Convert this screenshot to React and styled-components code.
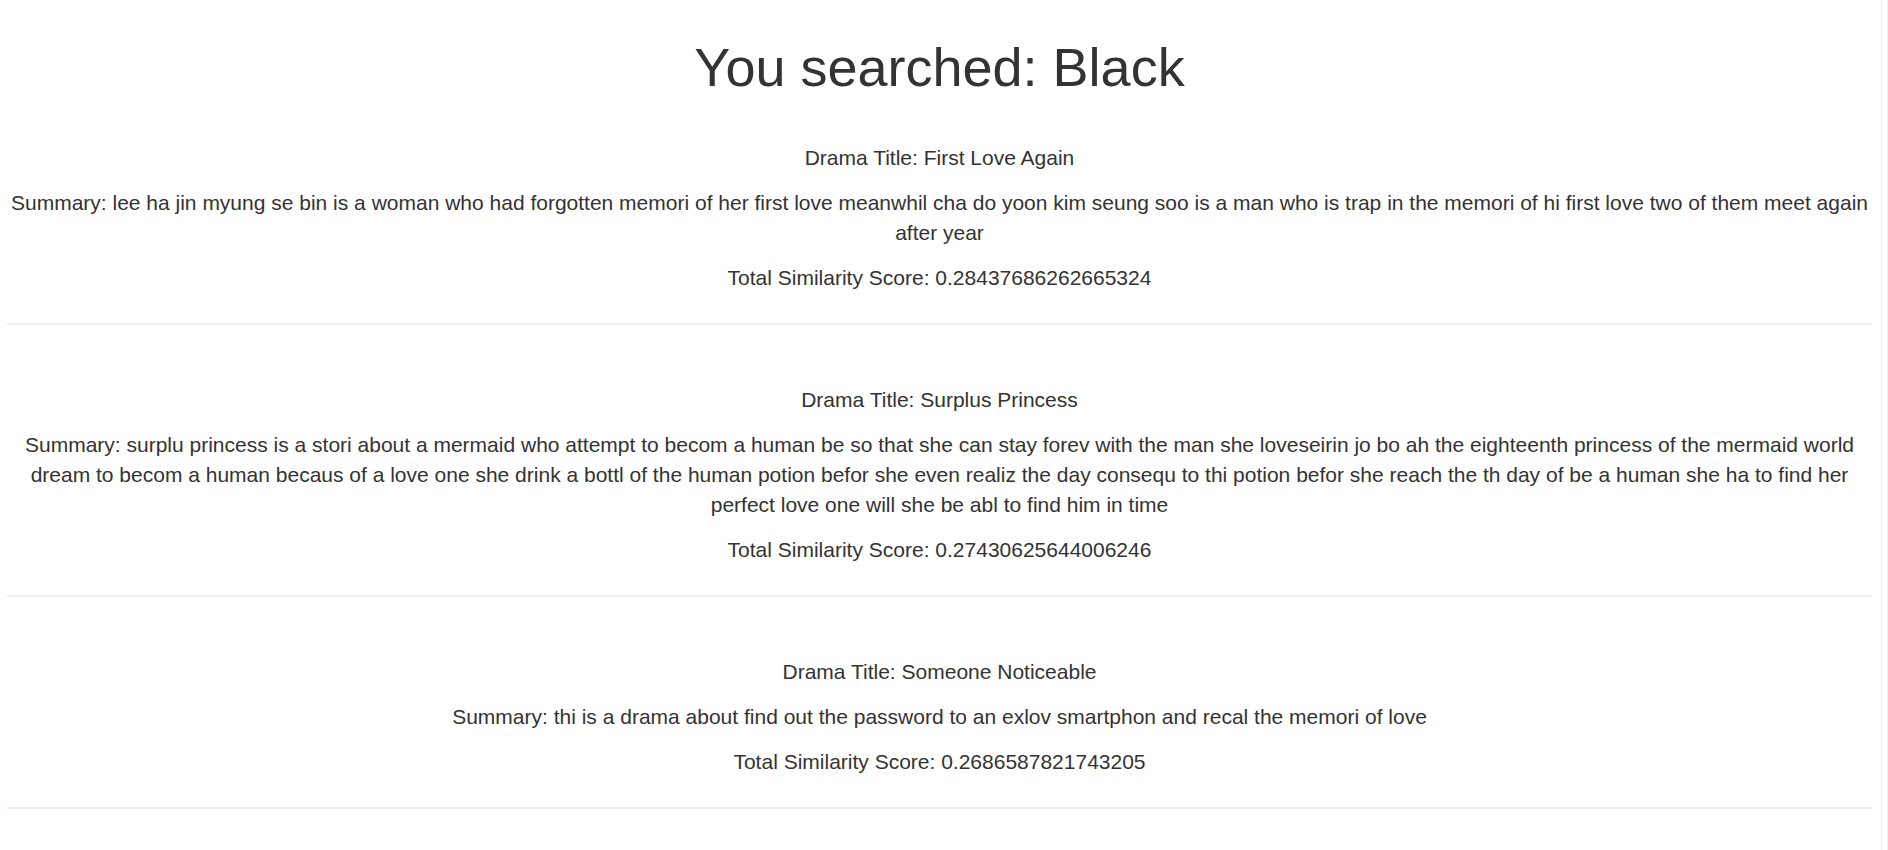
import React from "react";
import styled, { createGlobalStyle } from "styled-components";

const GlobalStyle = createGlobalStyle`
  html, body {
    margin: 0;
    padding: 0;
    background: #fff;
  }
  body {
    font-family: "Liberation Sans", Arial, Helvetica, sans-serif;
    font-size: 21px;
    line-height: 30px;
    color: #333;
  }
`;

const Page = styled.div`
  display: flex;
  min-height: 100vh;
`;

const Main = styled.main`
  flex: 1;
  min-width: 0;
  padding: 38px 0 0 7px;
  text-align: center;
`;

// faint scrollbar gutter on the right edge of the window
const Gutter = styled.div`
  width: 16px;
  flex-shrink: 0;
  display: flex;
  padding-left: 9px;
  box-sizing: border-box;
`;

const Thumb = styled.div`
  width: 6px;
  border-left: 1px solid #efefef;
  border-right: 1px solid #efefef;
`;

const Heading = styled.h1`
  margin: 0 0 16px;
  font-size: 54px;
  line-height: 1.1;
  font-weight: 500;
  color: #333;
`;

const Result = styled.section`
  padding-top: 30px;
`;

const Line = styled.p`
  margin: 0 0 15px;
`;

const Divider = styled.hr`
  margin: 30px 0;
  border: 0;
  border-top: 2px solid #eee;
  height: 0;
`;

const results = [
  {
    title: "First Love Again",
    summary:
      "lee ha jin myung se bin is a woman who had forgotten memori of her first love meanwhil cha do yoon kim seung soo is a man who is trap in the memori of hi first love two of them meet again after year",
    score: "0.28437686262665324",
  },
  {
    title: "Surplus Princess",
    summary:
      "surplu princess is a stori about a mermaid who attempt to becom a human be so that she can stay forev with the man she loveseirin jo bo ah the eighteenth princess of the mermaid world dream to becom a human becaus of a love one she drink a bottl of the human potion befor she even realiz the day consequ to thi potion befor she reach the th day of be a human she ha to find her perfect love one will she be abl to find him in time",
    score: "0.27430625644006246",
  },
  {
    title: "Someone Noticeable",
    summary:
      "thi is a drama about find out the password to an exlov smartphon and recal the memori of love",
    score: "0.2686587821743205",
  },
];

const App = () => {
  return (
    <>
      <GlobalStyle />
      <Page>
        <Main>
          <Heading>You searched: Black</Heading>
          {results.map((r) => (
            <Result key={r.title}>
              <Line>Drama Title: {r.title}</Line>
              <Line>Summary: {r.summary}</Line>
              <Line>Total Similarity Score: {r.score}</Line>
              <Divider />
            </Result>
          ))}
        </Main>
        <Gutter>
          <Thumb />
        </Gutter>
      </Page>
    </>
  );
};

export default App;
